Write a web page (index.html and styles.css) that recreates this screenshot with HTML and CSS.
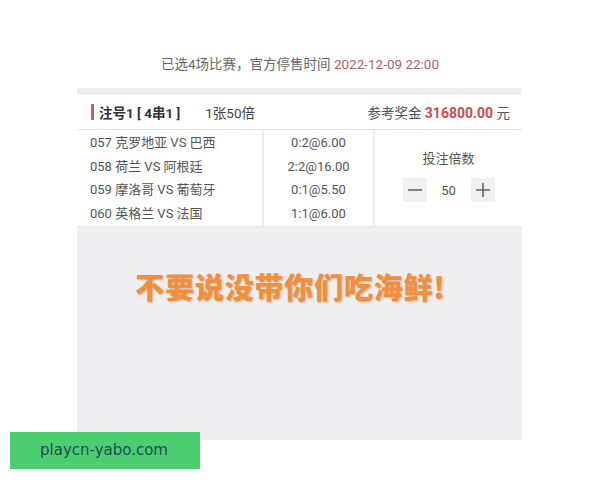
FILE: index.html
```html
<!DOCTYPE html>
<html lang="zh">
<head>
<meta charset="utf-8">
<link rel="stylesheet" href="styles.css">
</head>
<body>
<div class="notice">已选4场比赛，官方停售时间 <span class="date">2022-12-09 22:00</span></div>
<div class="panel">
  <div class="strip"></div>
  <div class="head">
    <div class="head-left">
      <span class="bar"></span>
      <span class="title">注号1 [ 4串1 ]</span>
      <span class="mult">1张50倍</span>
    </div>
    <div class="head-right">参考奖金 <span class="prize">316800.00</span> 元</div>
  </div>
  <div class="table">
    <div class="col matches">
      <div class="row">057 克罗地亚 VS 巴西</div>
      <div class="row">058 荷兰 VS 阿根廷</div>
      <div class="row">059 摩洛哥 VS 葡萄牙</div>
      <div class="row">060 英格兰 VS 法国</div>
    </div>
    <div class="col odds">
      <div class="row">0:2@6.00</div>
      <div class="row">2:2@16.00</div>
      <div class="row">0:1@5.50</div>
      <div class="row">1:1@6.00</div>
    </div>
    <div class="col stepper-col">
      <div class="step-label">投注倍数</div>
      <div class="stepper">
        <span class="btn"><svg width="16" height="16" viewBox="0 0 16 16"><path d="M1 8h14" stroke="#666" stroke-width="1.6"/></svg></span>
        <span class="val">50</span>
        <span class="btn"><svg width="16" height="16" viewBox="0 0 16 16"><path d="M1 8h14M8 1v14" stroke="#666" stroke-width="1.6"/></svg></span>
      </div>
    </div>
  </div>
  <div class="video">
    <div class="slogan">不要说没带你们吃海鲜!</div>
  </div>
</div>
<div class="watermark">playcn-yabo.com</div>
</body>
</html>
```
FILE: styles.css
```css
* { box-sizing: border-box; }
html, body { margin: 0; padding: 0; background: #fff; }
body {
  width: 600px;
  height: 480px;
  position: relative;
  overflow: hidden;
  font-family: "Roboto", "Noto Sans CJK SC", sans-serif;
  color: #555;
}
.notice {
  padding-top: 54px;
  height: 88px;
  line-height: 20px;
  font-size: 13.5px;
  text-align: center;
  color: #666;
}
.date { color: #b0626a; }
.panel {
  margin-left: 77px;
  width: 445px;
}
.strip { height: 7px; background: #efefef; }
.head {
  height: 35px;
  border-bottom: 1px solid #e6e6e6;
  display: flex;
  align-items: center;
  justify-content: space-between;
  padding: 0 12px 0 14px;
}
.head-left { display: flex; align-items: center; }
.bar {
  width: 3px;
  height: 16px;
  background: #d0595a;
  margin-right: 5px;
}
.title { font-weight: bold; color: #333; font-size: 13.5px; }
.mult { margin-left: 25px; font-size: 13.5px; color: #444; }
.head-right { font-size: 13.5px; color: #555; }
.prize { color: #c84d4e; font-weight: bold; font-size: 14px; }
.table {
  display: grid;
  grid-template-columns: 187px 111px 1fr;
  height: 97px;
  border-bottom: 1px solid #e6e6e6;
}
.col { display: flex; flex-direction: column; padding-top: 1px; }
.matches { border-right: 2px solid #ececec; padding-left: 13px; }
.odds { border-right: 2px solid #ececec; align-items: center; }
.row { height: 23.5px; line-height: 23.5px; font-size: 13px; color: #555; }
.stepper-col { align-items: center; padding-top: 20px; }
.step-label { font-size: 13px; color: #555; line-height: 18px; }
.stepper { display: flex; align-items: center; margin-top: 10px; }
.btn {
  width: 24px; height: 24px;
  background: #f0f0f0;
  display: flex; align-items: center; justify-content: center;
}
.val { width: 44px; text-align: center; font-size: 13px; color: #555; }
.video {
  height: 213px;
  background: #efeff2;
  padding-top: 43px;
  padding-right: 18px;
  text-align: center;
}
.slogan {
  font-family: "Noto Sans CJK SC", sans-serif;
  font-weight: 900;
  font-size: 29px;
  line-height: 32px;
  color: #f08f3c;
  text-shadow: 1px 1px 2px rgba(150, 80, 20, 0.35);
  letter-spacing: 0.8px;
}
.watermark {
  position: absolute;
  left: 10px;
  top: 432px;
  width: 190px;
  height: 37px;
  background: #4ccd6f;
  color: #1f4d55;
  font-family: "DejaVu Sans", sans-serif;
  font-size: 15px;
  line-height: 37px;
  padding-left: 30px;
}
```
